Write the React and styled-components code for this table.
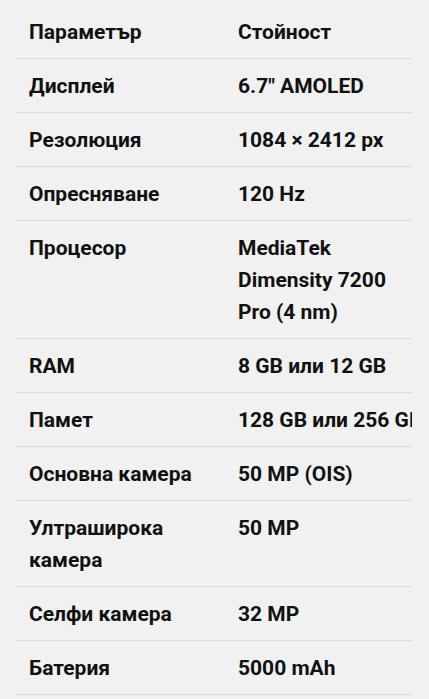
import styled, { createGlobalStyle } from 'styled-components';

const GlobalStyle = createGlobalStyle`
  html, body {
    margin: 0;
    padding: 0;
    background: #f1f1f1;
  }
  body {
    font-family: Roboto, "Noto Sans", "Liberation Sans", sans-serif;
    color: #111;
  }
`;

const specs = [
  ['Дисплей', '6.7" AMOLED'],
  ['Резолюция', '1084 × 2412 px'],
  ['Опресняване', '120 Hz'],
  ['Процесор', 'MediaTek Dimensity 7200 Pro (4 nm)'],
  ['RAM', '8 GB или 12 GB'],
  ['Памет', '128\u00a0GB\u00a0или\u00a0256\u00a0GB'],
  ['Основна камера', '50 MP (OIS)'],
  ['Ултраширока камера', '50 MP'],
  ['Селфи камера', '32 MP'],
  ['Батерия', '5000 mAh'],
];

const App = () => {
  return (
    <>
      <GlobalStyle />
      <SyPage>
        <SyTableWrap>
          <SyTable>
            <colgroup>
              <col style={{ width: 209 }} />
              <col />
            </colgroup>
            <thead>
              <SyRow>
                <SyHead>Параметър</SyHead>
                <SyHead>Стойност</SyHead>
              </SyRow>
            </thead>
            <tbody>
              {specs.map(([name, value]) => (
                <SyRow key={name}>
                  <SyCell>{name}</SyCell>
                  <SyCell>{value}</SyCell>
                </SyRow>
              ))}
            </tbody>
          </SyTable>
        </SyTableWrap>
      </SyPage>
    </>
  );
};

export default App;

const SyPage = styled.div`
  padding: 5px 17px 0 16px;
  height: 699px;
  box-sizing: border-box;
  overflow: hidden;
`;

const SyTableWrap = styled.div`
  width: 396px;
  overflow: hidden;
`;

const SyTable = styled.table`
  width: 396px;
  table-layout: fixed;
  border-collapse: collapse;
`;

const SyRow = styled.tr`
  border-bottom: 1px solid #dcdcdc;
`;

const SyHead = styled.th`
  text-align: left;
  vertical-align: top;
  padding: 11px 13px 10px;
  font-size: 21px;
  line-height: 32px;
  font-weight: 700;
  color: #111;
`;

const SyCell = styled.td`
  vertical-align: top;
  padding: 11px 13px 10px;
  font-size: 21px;
  line-height: 32px;
  font-weight: 700;
  color: #111;
`;
